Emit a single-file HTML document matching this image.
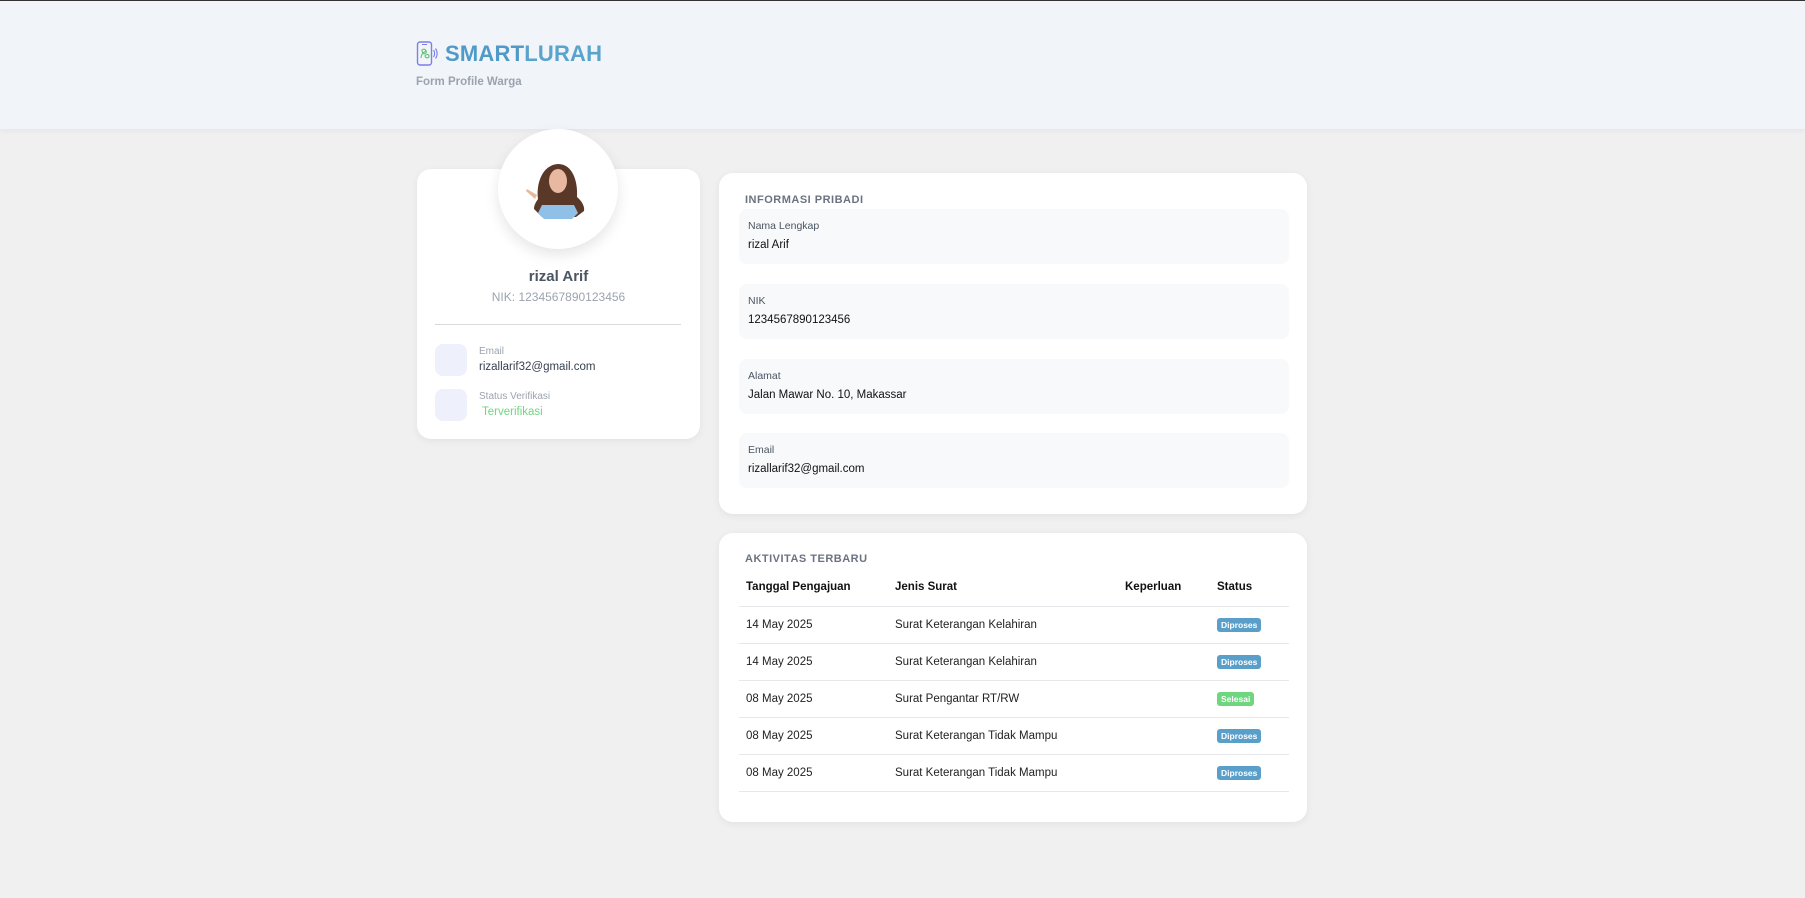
<!DOCTYPE html>
<html><head><meta charset="utf-8"><style>
*{box-sizing:border-box;margin:0;padding:0}
body{width:1805px;height:898px;background:#f0f0f0;font-family:"Liberation Sans",sans-serif;position:relative;overflow:hidden;color:#1f2937}
.hdr{position:absolute;left:0;top:0;width:1805px;height:129px;background:#f1f5f9;border-top:1px solid #333;box-shadow:0 2px 6px rgba(0,0,0,.05)}
.logo{position:absolute;left:416px;top:40px;display:flex;align-items:center}
.logo span{font-size:22px;font-weight:bold;color:#5aa3cc;margin-left:7px;letter-spacing:.2px}
.logo b{color:#4f9ac6}
.sub{position:absolute;left:416px;top:75px;font-size:11.5px;font-weight:bold;color:#9ca3af}
.card{position:absolute;background:#fff;border-radius:14px;box-shadow:0 2px 8px rgba(0,0,0,.06)}
.av{position:absolute;left:498px;top:129px;width:120px;height:120px;border-radius:50%;background:#fff;box-shadow:0 6px 14px rgba(0,0,0,.1)}
.t{position:absolute;white-space:nowrap}
.ib{position:absolute;left:18px;width:32px;height:32px;border-radius:8px;background:#eef0fb}
.sec{position:absolute;left:26px;font-size:11px;font-weight:bold;color:#6b7280;letter-spacing:.5px}
.f{position:absolute;left:20px;width:550px;height:55px;background:#f8f9fa;border-radius:8px}
.f .l{position:absolute;left:9px;top:11px;font-size:10.5px;color:#4b5563}
.f .v{position:absolute;left:9px;top:30px;font-size:11.5px;color:#111}
table{position:absolute;left:20px;top:35px;width:550px;border-collapse:collapse;font-size:11.5px}
th{text-align:left;font-weight:bold;color:#111;height:38px;border-bottom:1px solid #e5e7eb;padding-left:7px}
td{height:37px;border-bottom:1px solid #e5e7eb;padding-left:7px;color:#222}
.bd{display:inline-block;font-size:8.5px;font-weight:bold;color:#fff;background:#5a9fc9;border-radius:3px;padding:2px 4px}
.bd.s{background:#6ed67f}
</style></head><body>
<div class="hdr">
<div class="logo"><svg width="22" height="26" viewBox="0 0 22 26"><rect x="1.5" y="1" width="14" height="23" rx="2.5" fill="none" stroke="#7b7fe6" stroke-width="1.4"/><line x1="6" y1="3.5" x2="11" y2="3.5" stroke="#7b7fe6"/><path d="M5 17c0-4 3-6 5-7M6 9c2-2 5 0 4 3-2 2-4 0-4-3zM9 15c1-2 4-2 4 0s-3 3-4 0z" stroke="#5cc46e" fill="none" stroke-width="1.1"/><path d="M17.5 9c1.5 2 1.5 5 0 7M19.5 7.5c2.2 3 2.2 7 0 10" stroke="#7b7fe6" fill="none" stroke-width="1.1"/></svg><span><b>SMART</b>LURAH</span></div>
<div class="sub">Form Profile Warga</div>
</div>

<div class="card" style="left:417px;top:169px;width:283px;height:270px">
<div class="t" style="left:0;width:283px;text-align:center;top:99px;font-size:15px;font-weight:bold;color:#4b5563">rizal Arif</div>
<div class="t" style="left:0;width:283px;text-align:center;top:121px;font-size:12px;color:#9ca3af">NIK: 1234567890123456</div>
<div style="position:absolute;left:18px;top:155px;width:246px;height:1px;background:#d9d9d9"></div>
<div class="ib" style="top:175px"></div>
<div class="t" style="left:62px;top:177px;font-size:10px;color:#9ca3af">Email</div>
<div class="t" style="left:62px;top:192px;font-size:11.5px;color:#374151">rizallarif32@gmail.com</div>
<div class="ib" style="top:220px"></div>
<div class="t" style="left:62px;top:222px;font-size:10px;color:#9ca3af">Status Verifikasi</div>
<div class="t" style="left:65px;top:237px;font-size:11.5px;color:#6ed67f">Terverifikasi</div>
</div>
<div class="av"><svg width="120" height="120" viewBox="0 0 120 120"><path d="M40 70c-2-15 4-34 20-35 15 0 20 18 19 33 5 4 8 10 7 14l-8 6H44l-8-8c0-4 2-7 4-10z" fill="#5a3828"/><ellipse cx="60" cy="52" rx="9" ry="12" fill="#e8b9a0"/><path d="M44 76h32l4 8-6 6H46l-6-6z" fill="#8ec0e8"/><path d="M29 60l10 6-2 4-9-8z" fill="#e8b9a0"/></svg></div>

<div class="card" style="left:719px;top:173px;width:588px;height:341px">
<div class="sec" style="top:21px">INFORMASI PRIBADI</div>
<div class="f" style="top:36px"><div class="l">Nama Lengkap</div><div class="v">rizal Arif</div></div>
<div class="f" style="top:111px"><div class="l">NIK</div><div class="v">1234567890123456</div></div>
<div class="f" style="top:186px"><div class="l">Alamat</div><div class="v">Jalan Mawar No. 10, Makassar</div></div>
<div class="f" style="top:260px"><div class="l">Email</div><div class="v">rizallarif32@gmail.com</div></div>
</div>

<div class="card" style="left:719px;top:533px;width:588px;height:289px">
<div class="sec" style="top:20px">AKTIVITAS TERBARU</div>
<table>
<tr><th style="width:149px">Tanggal Pengajuan</th><th style="width:230px">Jenis Surat</th><th style="width:92px">Keperluan</th><th>Status</th></tr>
<tr><td>14 May 2025</td><td>Surat Keterangan Kelahiran</td><td></td><td><span class="bd">Diproses</span></td></tr>
<tr><td>14 May 2025</td><td>Surat Keterangan Kelahiran</td><td></td><td><span class="bd">Diproses</span></td></tr>
<tr><td>08 May 2025</td><td>Surat Pengantar RT/RW</td><td></td><td><span class="bd s">Selesai</span></td></tr>
<tr><td>08 May 2025</td><td>Surat Keterangan Tidak Mampu</td><td></td><td><span class="bd">Diproses</span></td></tr>
<tr><td>08 May 2025</td><td>Surat Keterangan Tidak Mampu</td><td></td><td><span class="bd">Diproses</span></td></tr>
</table>
</div>
</body></html>
